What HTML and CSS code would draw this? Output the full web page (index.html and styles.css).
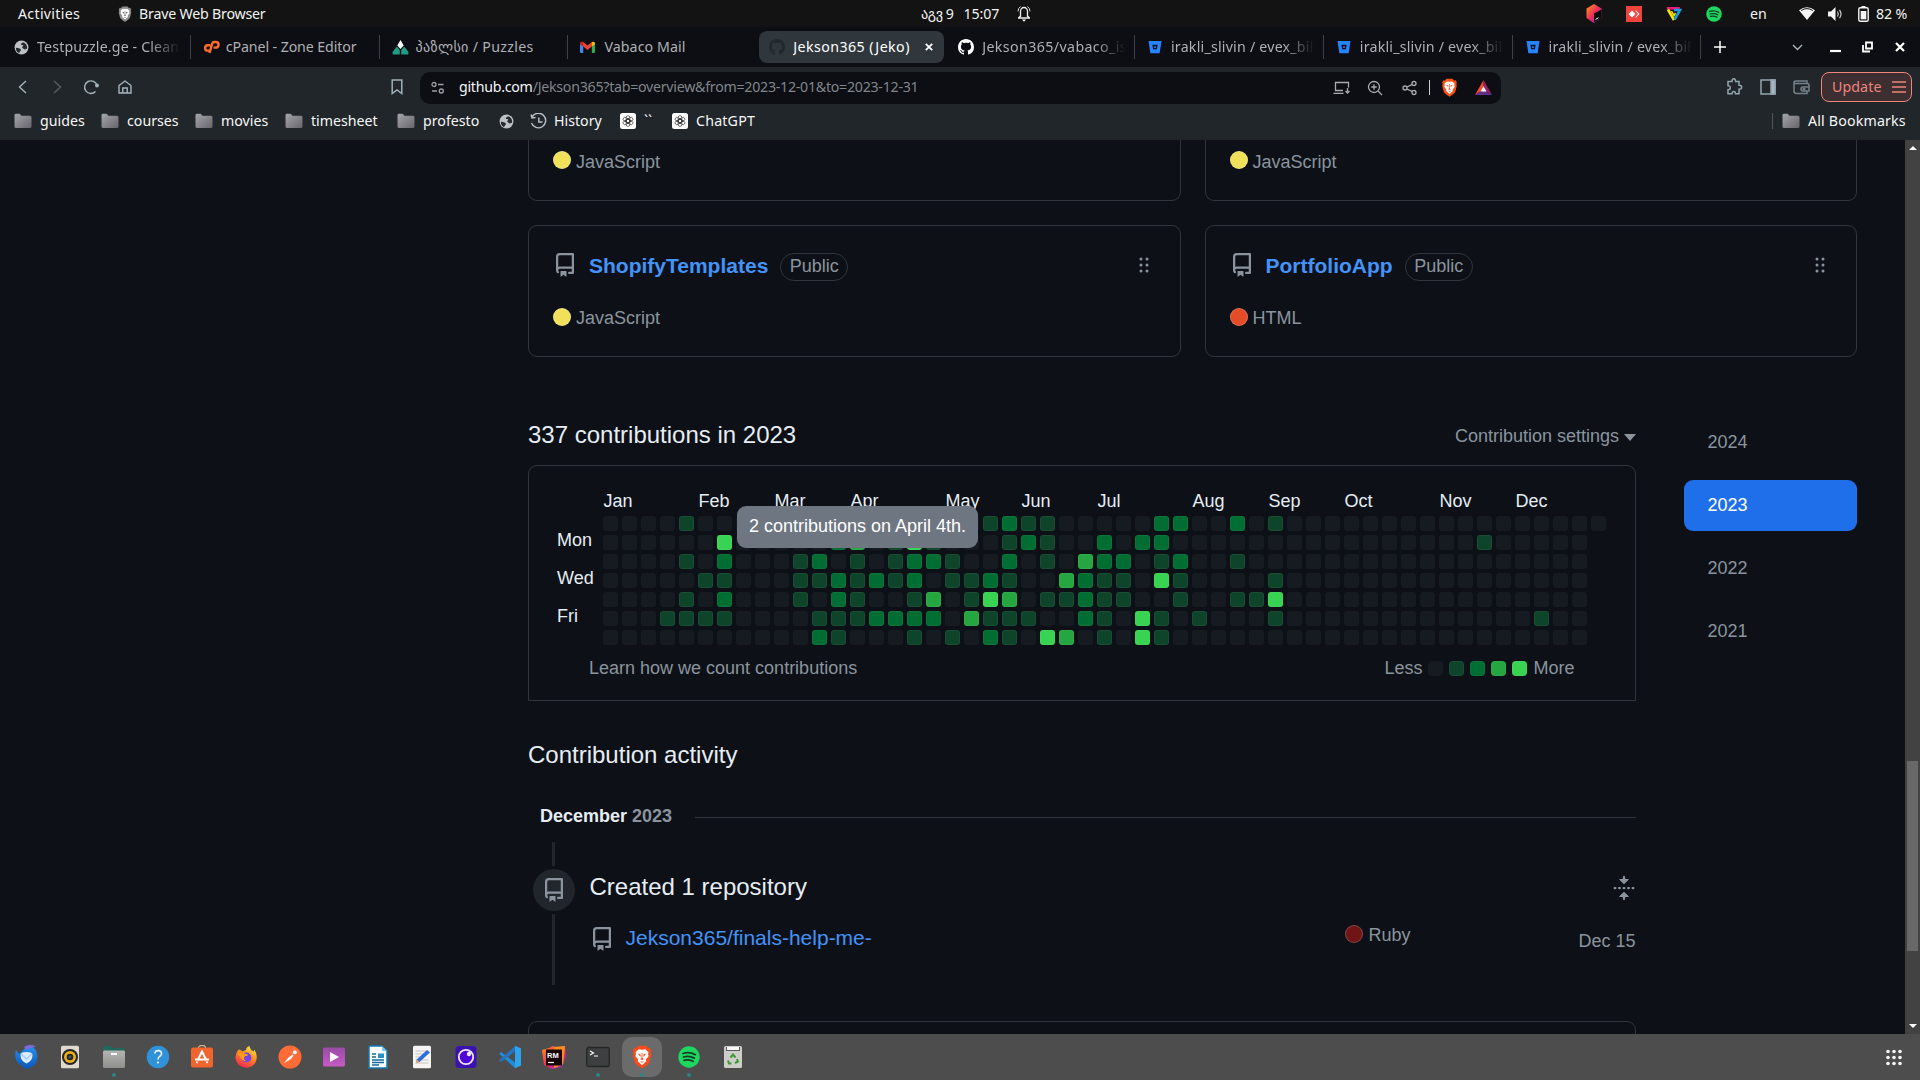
FILE: index.html
```html
<!DOCTYPE html>
<html lang="en">
<head>
<meta charset="utf-8">
<title>Jekson365 (Jeko)</title>
<link rel="stylesheet" href="styles.css">
</head>
<body>
<svg class="defs" aria-hidden="true">
  <defs>
    <linearGradient id="g-folder" x1="0" y1="0" x2="1" y2="1"><stop offset="0" stop-color="#a5a5ad"/><stop offset="1" stop-color="#66656a"/></linearGradient>
    <linearGradient id="g-hot" x1="0" y1="0" x2="1" y2="1"><stop offset="0" stop-color="#ff9a16"/><stop offset=".5" stop-color="#ee2b5b"/><stop offset="1" stop-color="#8e2be0"/></linearGradient>
    <linearGradient id="g-fox" x1=".8" y1="0" x2=".3" y2="1"><stop offset="0" stop-color="#fff14a"/><stop offset=".45" stop-color="#ff8a1e"/><stop offset="1" stop-color="#f5264f"/></linearGradient>
    <linearGradient id="g-blue" x1="0" y1="0" x2="0" y2="1"><stop offset="0" stop-color="#2a92f0"/><stop offset="1" stop-color="#0a55b8"/></linearGradient>
    <linearGradient id="g-video" x1="0" y1="0" x2="0" y2="1"><stop offset="0" stop-color="#9a4ba8"/><stop offset="1" stop-color="#c65bc4"/></linearGradient>
    <linearGradient id="g-grey" x1="0" y1="0" x2="0" y2="1"><stop offset="0" stop-color="#b4b4b2"/><stop offset="1" stop-color="#8f8f8d"/></linearGradient>
  </defs>
  <symbol id="repo" viewBox="0 0 16 16"><path d="M2 2.5A2.5 2.5 0 0 1 4.5 0h8.75a.75.75 0 0 1 .75.75v12.5a.75.75 0 0 1-.75.75h-2.5a.75.75 0 0 1 0-1.5h1.75v-2h-8a1 1 0 0 0-.714 1.7.75.75 0 1 1-1.072 1.05A2.495 2.495 0 0 1 2 11.5Zm10.5-1h-8a1 1 0 0 0-1 1v6.708A2.486 2.486 0 0 1 4.5 9h8ZM5 12.25a.25.25 0 0 1 .25-.25h3.5a.25.25 0 0 1 .25.25v3.25a.25.25 0 0 1-.4.2l-1.45-1.087a.249.249 0 0 0-.3 0L5.4 15.7a.25.25 0 0 1-.4-.2Z"/></symbol>
  <symbol id="grab" viewBox="0 0 16 16"><path d="M10 13a1 1 0 1 1 0-2 1 1 0 0 1 0 2Zm0-4a1 1 0 1 1 0-2 1 1 0 0 1 0 2Zm-4 4a1 1 0 1 1 0-2 1 1 0 0 1 0 2Zm5-9a1 1 0 1 1-2 0 1 1 0 0 1 2 0ZM7 8a1 1 0 1 1-2 0 1 1 0 0 1 2 0ZM6 5a1 1 0 1 1 0-2 1 1 0 0 1 0 2Z"/></symbol>
  <symbol id="fold" viewBox="0 0 16 16"><path d="M10.896 2H8.75V.75a.75.75 0 0 0-1.5 0V2H5.104a.25.25 0 0 0-.177.427l2.896 2.896a.25.25 0 0 0 .354 0l2.896-2.896A.25.25 0 0 0 10.896 2ZM8.75 15.25a.75.75 0 0 1-1.5 0V14H5.104a.25.25 0 0 1-.177-.427l2.896-2.896a.25.25 0 0 1 .354 0l2.896 2.896a.25.25 0 0 1-.177.427H8.75v1.25Zm-6.5-6.5a.75.75 0 0 0 0-1.5h-.5a.75.75 0 0 0 0 1.5h.5ZM6 8a.75.75 0 0 1-.75.75h-.5a.75.75 0 0 1 0-1.5h.5A.75.75 0 0 1 6 8Zm2.25.75a.75.75 0 0 0 0-1.5h-.5a.75.75 0 0 0 0 1.5h.5ZM12 8a.75.75 0 0 1-.75.75h-.5a.75.75 0 0 1 0-1.5h.5A.75.75 0 0 1 12 8Zm2.25.75a.75.75 0 0 0 0-1.5h-.5a.75.75 0 0 0 0 1.5h.5Z"/></symbol>
  <symbol id="github" viewBox="0 0 16 16"><path d="M8 0c4.42 0 8 3.58 8 8a8.013 8.013 0 0 1-5.45 7.59c-.4.08-.55-.17-.55-.38 0-.27.01-1.13.01-2.2 0-.75-.25-1.23-.54-1.48 1.78-.2 3.65-.88 3.65-3.95 0-.88-.31-1.59-.82-2.15.08-.2.36-1.02-.08-2.12 0 0-.67-.22-2.2.82-.64-.18-1.32-.27-2-.27-.68 0-1.36.09-2 .27-1.53-1.03-2.2-.82-2.2-.82-.44 1.1-.16 1.92-.08 2.12-.51.56-.82 1.28-.82 2.15 0 3.06 1.86 3.75 3.64 3.95-.23.2-.44.55-.51 1.07-.46.21-1.61.55-2.33-.66-.15-.24-.6-.83-1.23-.82-.67.01-.27.38.01.53.34.19.73.9.82 1.13.16.45.68 1.31 2.69.94 0 .67.01 1.3.01 1.49 0 .21-.15.45-.55.38A7.995 7.995 0 0 1 0 8c0-4.42 3.58-8 8-8Z"/></symbol>
  <symbol id="globe" viewBox="0 0 16 16"><circle cx="8" cy="8" r="7.4" fill="#bdc1c6"/><path d="M2 8.200c1.400.1 2.600.5 3.800.8 1.200.4 1.800 1 1.400 2.100-.3.800-1 1-1.200 1.800-.1.500-.3.900-.8 1C3.200 12.900 1.900 10.800 2 8.200ZM9.500 2.300c-.3.900-1.900 1-2.100 1.800-.2 1 .5 1.300 1.500 1.300 1.200.1 1.300 1.200.4 1.600-.7.400-.8 1.300.1 1.700.8.400 1.300 1.300 2.400 1.300.7 0 1.200-.6 2-.6.8-3.100-1-6.100-4.300-7.100Z" fill="#24292c"/></symbol>
  <symbol id="bucket" viewBox="0 0 16 16"><path d="M.6 1h14.800l-2.100 14H2.700Z" fill="#2684ff"/><path d="M5 5.300h6l-.9 5.400H5.900Z" fill="#0d0e13"/><path d="M7 7h2v2H7Z" fill="#2684ff"/></symbol>
  <symbol id="folder" viewBox="0 0 18 18"><path d="M.5 3.200Q.5 1.800 2 1.800h3.800l1.500 2H16q1.500 0 1.500 1.500v9.200q0 1.500-1.500 1.500H2Q.5 16 .5 14.500Z" fill="url(#g-folder)"/></symbol>
  <symbol id="lion" viewBox="0 0 24 28"><path d="M7.500 1h9l2.200 2.500 2.300-.3 1.800 3.300-.8 2.500.8 2.500-2.500 9.500-3 3L12 27.500 6.700 24l-3-3L1.200 11.500 2 9l-.8-2.500L3 3.200l2.300.3Z"/><path d="M12 5.500 16 5l3.500 3.500-.5 2.500.8 1.800-3.300 4 .5 2.200-5 4.500-5-4.500.5-2.200-3.300-4L5 11l-.5-2.500L8 5Z" fill="#fff"/><path d="m7 10 3.500 1-.3 3Zm10 0-3.500 1 .3 3ZM9.500 18.500l2.500 1 2.500-1L12 21ZM11.500 9h1v6l1.500 1.500-2 1-2-1 1.500-1.500Z" fill="currentColor"/></symbol>
  <symbol id="spotify" viewBox="0 0 20 20"><circle cx="10" cy="10" r="9.700" fill="#1ed760"/><path d="M4.500 6.800q6-1.800 11.300 1.100M5 10q5.300-1.400 9.800 1M5.500 13q4.300-1 8.200.9" fill="none" stroke="#173b25" stroke-width="1.600" stroke-linecap="round"/></symbol>
  <symbol id="gpt" viewBox="0 0 16 16"><rect width="16" height="16" rx="2.500" fill="#fff"/><g fill="none" stroke="#333" stroke-width=".7"><rect x="6.200" y="2.600" width="3.600" height="7.400" rx="1.800"/><rect x="6.200" y="2.600" width="3.600" height="7.400" rx="1.800" transform="rotate(60 8 8)"/><rect x="6.200" y="2.600" width="3.600" height="7.400" rx="1.800" transform="rotate(120 8 8)"/><rect x="6.200" y="2.600" width="3.600" height="7.400" rx="1.800" transform="rotate(180 8 8)"/><rect x="6.200" y="2.600" width="3.600" height="7.400" rx="1.800" transform="rotate(240 8 8)"/><rect x="6.200" y="2.600" width="3.600" height="7.400" rx="1.800" transform="rotate(300 8 8)"/></g></symbol>
</svg>

<header class="topbar">
  <div class="top-left">
    <span class="t-activities">Activities</span>
    <svg class="top-lion" width="14" height="18"><use href="#lion"/></svg>
    <span class="t-brave">Brave Web Browser</span>
  </div>
  <div class="clock"><span>აგვ 9</span><span class="time">15:07</span>
    <svg width="14" height="17" viewBox="0 0 14 17" fill="none" stroke="#eee" stroke-width="1.300"><path d="M3.500 12V6.500a3.500 4 0 0 1 7 0V12M1 13h12M3.500 11 1.500 13m9-2 2 2"/><path d="M1 6.500Q1.200 3 3.500 1.500M13 6.500Q12.800 3 10.500 1.500" stroke-width=".9"/><path d="M5 14.500h4L7 16.700Z" fill="#fff" stroke="none"/></svg>
  </div>
  <div class="tray">
    <svg width="16" height="19" viewBox="0 0 16 19"><path d="m8 0 7.500 4.500v9L8 19 .5 14V4.500Z" fill="url(#g-hot)"/><path d="m8 9.500 7.500-4v8L8 18.500Z" fill="#0a0808"/><path d="M9.500 15.500l3-1.800" stroke="#fff" stroke-width="1"/></svg>
    <svg width="16" height="16" viewBox="0 0 16 16"><rect width="16" height="16" fill="#ef443b"/><path d="m6 4.500 3.500 3.500L6 11.500 2.500 8ZM9 4.500h1L13.500 8 10 11.500H9L12 8Z" fill="#fff"/></svg>
    <svg width="16" height="16" viewBox="0 0 16 16" fill="none" stroke-width="2.600"><path d="M.8 2.300h13" stroke="#e5197f"/><path d="M2 3.500 8 14" stroke="#ffe600"/><path d="M8.500 13.500 14 4H8" stroke="#1b9de0"/><path d="m5.500 5 2.500 4.500L9.500 7" stroke="#ffe600" stroke-width="1.500"/></svg>
    <svg width="16" height="16"><use href="#spotify"/></svg>
    <span class="lang">en</span>
    <svg class="wifi" width="16" height="13" viewBox="0 0 16 13"><path d="M0 3.200Q8-2.500 16 3.200L8 13Z" fill="#f4f4f4"/><path d="M2.200 3.500Q8-.3 13.800 3.500" fill="none" stroke="#131313" stroke-width="1"/></svg>
    <svg class="vol" width="16" height="14" viewBox="0 0 16 14"><path d="M0 4.500h3L7.500 0v14L3 9.500H0Z" fill="#f4f4f4"/><path d="M9.500 4.500q1.600 2.500 0 5M11.500 2.800q3 4.200 0 8.400" fill="none" stroke="#ccc" stroke-width="1.200"/></svg>
    <svg class="batt" width="11" height="16" viewBox="0 0 11 16"><path d="M3.500 0h4v2h-4Z" fill="#f4f4f4"/><rect x=".8" y="1.800" width="9.400" height="13.400" rx="1.500" fill="none" stroke="#f4f4f4" stroke-width="1.400"/><path d="M2.700 5h5.600v8.300H2.700Z" fill="#f4f4f4"/></svg>
    <span class="pct">82 %</span>
  </div>
</header>

<nav class="tabs">
  <div class="tab"><svg width="15" height="15"><use href="#globe"/></svg><span class="fade puzzle">Testpuzzle.ge - Clean</span></div>
  <div class="tab"><svg width="17" height="14" viewBox="0 0 17 14" fill="none" stroke="#ff6c2c" stroke-width="2.400"><path d="M7.300 5.200H4.800a2.700 2.700 0 0 0 0 5.400h1.500M6.500 13l2.700-9.500q.4-1.500 2-1.500h1.600a2.700 2.700 0 0 1 0 5.600h-2.300"/></svg><span class="cpanel">cPanel - Zone Editor</span></div>
  <div class="tab"><svg width="17" height="15" viewBox="0 0 17 15"><path d="m8.500 0 3.200 5.500L8.500 9 5.300 5.500Z" fill="#fff"/><path d="m4.800 6.500 3 3.500v4.500H.8L.5 12ZM12.200 6.500l-3 3.500v4.500h7L16.500 12Z" fill="#1f9c83"/></svg><span class="kartuli">პაზლსი / Puzzles</span></div>
  <div class="tab nosep"><svg width="15" height="12" viewBox="0 0 15 12"><path d="M0 2h3.200v10H1.200Q0 12 0 11Z" fill="#4285f4"/><path d="M11.800 2H15v9q0 1-1.200 1h-2Z" fill="#34a853"/><path d="M0 2Q1 0 3.200 1l4.300 3.500L11.800 1v4.500L7.500 9 3.200 5.500Z" fill="#ea4335"/><path d="M11.800 1Q14 0 15 2v1.200l-3.200 2.400Z" fill="#fbbc04"/><path d="M0 2q1-2 3.200-1v4.500L0 3.300Z" fill="#c5221f"/></svg><span class="mail">Vabaco Mail</span></div>
  <div class="tab active"><svg width="16" height="16" fill="#22282d"><use href="#github"/></svg><span class="jeko">Jekson365 (Jeko)</span><svg class="close" width="8" height="8" viewBox="0 0 8 8" stroke="#fff" stroke-width="1.800"><path d="m.8.8 6.400 6.400m0-6.400L.8 7.200"/></svg></div>
  <div class="tab"><svg width="16" height="16" fill="#fff"><use href="#github"/></svg><span class="fade vabaco">Jekson365/vabaco_is</span></div>
  <div class="tab bb"><svg width="14" height="14"><use href="#bucket"/></svg><span class="fade">irakli_slivin / evex_bil</span></div>
  <div class="tab bb"><svg width="14" height="14"><use href="#bucket"/></svg><span class="fade">irakli_slivin / evex_bil</span></div>
  <div class="tab bb"><svg width="14" height="14"><use href="#bucket"/></svg><span class="fade">irakli_slivin / evex_bil</span></div>
  <svg class="winctl" width="200" height="20" viewBox="0 0 200 20" fill="none" stroke="#fff" stroke-width="1.800"><path d="M8 10h12M14 4v12" stroke-width="1.500"/><path d="m87 8 4.500 4.500L96 8" stroke="#aab4ba" stroke-width="1.400"/><path d="M124 14h11" stroke-width="2.200"/><path d="M160 5.500h6v6h-6Z"/><path d="M157 8v6.500h7"/><path d="m190 6 8 8m0-8-8 8" stroke-width="2.200"/></svg>
</nav>

<div class="toolbar">
  <svg class="nav-icons" width="140" height="20" viewBox="0 0 140 20" fill="none" stroke="#a5b5bd" stroke-width="1.400"><path d="m26 4-6.500 6 6.500 6"/><path d="m54 4 6.500 6-6.500 6" stroke="#566067"/><path d="M95.500 14.500A6.300 6.300 0 1 1 97 8.500"/><circle cx="97" cy="8.500" r="1.900" fill="#a5b5bd" stroke="none"/><path d="M119 8.500 125 4l6 4.500V16h-12ZM122.800 16v-5h4.400v5"/></svg>
  <svg class="bm-icon" width="14" height="18" viewBox="0 0 14 18" fill="none" stroke="#9fb0b8" stroke-width="1.500"><path d="M2.200 2h9.600v13.500L7 12l-4.800 3.500Z"/></svg>
  <div class="address">
    <svg class="tune" width="14" height="14" viewBox="0 0 14 14" fill="none" stroke="#9aa0a6" stroke-width="1.300"><circle cx="3" cy="3.500" r="2"/><path d="M7 3.500h5.500M1 10h5"/><circle cx="10.300" cy="10" r="2"/></svg>
    <span class="url"><b>github.com</b>/Jekson365?tab=overview&amp;from=2023-12-01&amp;to=2023-12-31</span>
    <svg class="addr-icons" width="108" height="22" viewBox="0 0 108 22" fill="none" stroke="#a8abb0" stroke-width="1.300"><path d="M13 13.500H5.500v-8h13v5M3.500 16.300h10M17.500 11v5m-2-2 2 2 2-2"/><circle cx="44" cy="10" r="5.500"/><path d="m48 14 4 4M44 7.300v5.400M41.300 10h5.400"/><circle cx="75" cy="11" r="2"/><circle cx="84" cy="6.500" r="2"/><circle cx="84" cy="15.500" r="2"/><path d="m77 10 5.200-2.600M77 12l5.200 2.600"/><path d="M99.500 3v15" stroke="#c8cace" stroke-width="1"/></svg>
    <svg class="addr-lion" width="17" height="19" color="#fb542b" fill="#fb5016"><use href="#lion"/></svg>
    <svg class="bat" width="17" height="15" viewBox="0 0 17 15"><path d="M8.500 0 0 15l6-4 2.500-5Z" fill="#ff4724"/><path d="M8.500 0 17 15l-6-4-2.500-5Z" fill="#9e1f63"/><path d="m0 15 6-4h5l6 4Z" fill="#662d91"/><path d="m8.500 6-3 5.500h6Z" fill="#fff"/></svg>
  </div>
  <svg class="right-icons" width="96" height="22" viewBox="0 0 96 22" fill="none" stroke="#93a5ae" stroke-width="1.500"><path d="M7 5.500h3q0-2.800 1.800-2.800T13.600 5.500h3.400v3.700q2.700 0 2.700 2t-2.700 2v4.600H13.500q0-2.200-1.700-2.200T10 17.800H6v-4q2.300 0 2.300-2T6 9.800V5.500Z"/><path d="M39 4h14v14H39Z"/><path d="M49 4h4v14h-4Z" fill="#a6b7c0"/><g stroke="#73818a"><path d="M85 8V5H74q-2 0-2 1.500V15q0 2.500 2.500 2.500H85V15M72 7.500h13q2 0 2 2V15h-6q-2 0-2-2t2-2h6"/><circle cx="82" cy="13" r=".8"/></g></svg>
  <div class="update"><span>Update</span><svg width="14" height="12" viewBox="0 0 14 12" stroke="#f0857b" stroke-width="1.300"><path d="M0 1h14M0 6h14M0 11h14"/></svg></div>
</div>

<div class="bookmarks">
  <svg width="18" height="18"><use href="#folder"/></svg><span class="b1">guides</span>
  <svg width="18" height="18"><use href="#folder"/></svg><span class="b2">courses</span>
  <svg width="18" height="18"><use href="#folder"/></svg><span class="b3">movies</span>
  <svg width="18" height="18"><use href="#folder"/></svg><span class="b4">timesheet</span>
  <svg width="18" height="18"><use href="#folder"/></svg><span class="b5">profesto</span>
  <svg width="15" height="15"><use href="#globe"/></svg>
  <svg class="bhist" width="17" height="17" viewBox="0 0 17 17" fill="none" stroke="#bdc1c6" stroke-width="1.400"><path d="M2.300 3.500A7.300 7.300 0 1 1 1.500 10M1 1.500l1 3.500 3.500-.5M8.800 4.500V9H12.500"/></svg><span class="b6">History</span>
  <svg width="16" height="16"><use href="#gpt"/></svg><span class="b7">``</span>
  <svg width="16" height="16"><use href="#gpt"/></svg><span class="b8">ChatGPT</span>
  <div class="all"><svg width="18" height="18"><use href="#folder"/></svg><span>All Bookmarks</span></div>
</div>

<main class="viewport">
  <div class="profile">
    <section class="pins">
      <article class="pin cut"><p class="langrow"><i class="dot js"></i>JavaScript</p></article>
      <article class="pin cut"><p class="langrow"><i class="dot js"></i>JavaScript</p></article>
      <article class="pin">
        <div class="pinhead"><svg class="ricon" width="24" height="24"><use href="#repo"/></svg><a>ShopifyTemplates</a><span class="pill">Public</span><svg class="grab" width="24" height="24"><use href="#grab"/></svg></div>
        <p class="langrow"><i class="dot js"></i>JavaScript</p>
      </article>
      <article class="pin">
        <div class="pinhead"><svg class="ricon" width="24" height="24"><use href="#repo"/></svg><a>PortfolioApp</a><span class="pill">Public</span><svg class="grab" width="24" height="24"><use href="#grab"/></svg></div>
        <p class="langrow"><i class="dot html"></i>HTML</p>
      </article>
    </section>

    <div class="columns">
      <div class="feed">
        <div class="chead"><h2>337 contributions in 2023</h2><span class="settings">Contribution settings<i class="caret"></i></span></div>
        <section class="calendar">
          <div class="months" id="months"></div>
          <div class="calbody">
            <div class="days"><span>Mon</span><span>Wed</span><span>Fri</span></div>
            <div class="cells" id="cells"></div>
          </div>
          <div class="calfoot"><span>Learn how we count contributions</span><div class="legend"><span>Less</span><i class="c l0"></i><i class="c l1"></i><i class="c l2"></i><i class="c l3"></i><i class="c l4"></i><span>More</span></div></div>
          <div class="tooltip">2 contributions on April 4th.</div>
        </section>

        <h2 class="acttitle">Contribution activity</h2>
        <h3 class="month"><span>December <em>2023</em></span></h3>
        <div class="timeline">
          <div class="rail"><i class="bar top"></i><div class="badge"><svg width="24" height="24"><use href="#repo"/></svg></div><i class="bar bottom"></i></div>
          <div class="event">
            <div class="evhead"><span>Created 1 repository</span><svg width="24" height="24"><use href="#fold"/></svg></div>
            <div class="evrow"><svg class="evicon" width="24" height="24"><use href="#repo"/></svg><a>Jekson365/finals-help-me-</a><span class="ruby"><i class="dot rb"></i>Ruby</span><time>Dec 15</time></div>
          </div>
        </div>
        <div class="more"></div>
      </div>
      <aside class="years"><a>2024</a><a class="sel">2023</a><a>2022</a><a>2021</a></aside>
    </div>
  </div>
  <div class="scroll"><i class="up"></i><i class="thumb"></i><i class="down"></i></div>
</main>

<footer class="dock">
  <div class="app"><svg viewBox="0 0 24 24"><path d="M2 5q-2 5 1 12l9 7q11-2 11.500-12Q23 3 16 .5q-5 1-6 4L5 9Z" fill="url(#g-blue)"/><path d="M10 2Q14-1 20 .5L22 2q-6-.5-9 3Z" fill="#8467dc"/><path d="M6.500 10q0-3 6-3t6 3q0 6-6 8.500-6-2.500-6-8.500Z" fill="#dcecfb"/><path d="m7 9 5.500 5L18 9" fill="none" stroke="#a6cdf5" stroke-width="1.500"/></svg></div>
  <div class="app"><svg viewBox="0 0 24 24"><rect x="3" y=".8" width="18" height="22.400" rx="1.500" fill="#dfdacd"/><circle cx="12" cy="12" r="8" fill="#242424"/><circle cx="12" cy="12" r="6" fill="#e6b01e"/><circle cx="12" cy="12" r="3.300" fill="#242424"/><circle cx="12" cy="12" r="1.400" fill="#555"/></svg></div>
  <div class="app run"><svg viewBox="0 0 24 24"><path d="M1 3q0-2 2-2h6l2 2h10q2 0 2 2v4H1Z" fill="#23685d"/><rect x="1" y="5.500" width="22" height="17.500" rx="1.500" fill="url(#g-grey)"/><rect x="9" y="8" width="6" height="2" fill="#fff"/></svg></div>
  <div class="app"><svg viewBox="0 0 24 24"><circle cx="12" cy="12" r="11.200" fill="#2f93dc"/><path d="M8.800 8.500q.5-3 3.400-3 3.500.2 3.300 3.300-.2 1.700-2 2.700-1.500 1-1.500 3" fill="none" stroke="#fff" stroke-width="1.500"/><circle cx="12" cy="17.500" r="1.100" fill="#fff"/></svg></div>
  <div class="app"><svg viewBox="0 0 24 24"><path d="M8.500 3q0-2.500 3.500-2.500T15.500 3" fill="none" stroke="#d9b996" stroke-width="1.200"/><rect x="1" y="2.500" width="22" height="20" rx="2" fill="#f0642d"/><path d="m7.500 15.500 4.500-9 4.500 9M5 14.500h14M6.500 18l1-1.500m10 1.500-1-1.500" fill="none" stroke="#fff" stroke-width="2"/></svg></div>
  <div class="app"><svg viewBox="0 0 24 24"><path d="M4.500 4.500q2 .2 4 2L12 5q0-3 3.500-4 .5 3.500 4 5.500.8-1 .6-2 4 5 2 11.500Q19.500 22.500 12 22.700 3 22 1.500 13.500 1 8.500 4.500 4.500Z" fill="url(#g-fox)"/><circle cx="12.300" cy="12.500" r="5" fill="#7542e5"/><path d="M3 9q4-3 8-.3 3 0 3 1.800l-3 .8q-3 3 2 5-6 0-7-5Z" fill="#ff9b1f"/></svg></div>
  <div class="app"><svg viewBox="0 0 24 24"><circle cx="12" cy="12" r="11.500" fill="#ff6c37"/><path d="m6 18 4.500-5.500 4-3 1 1-2.500 3.500L8 17Z" fill="#fff"/><circle cx="16.800" cy="7.300" r="2" fill="#fff"/></svg></div>
  <div class="app"><svg viewBox="0 0 24 24"><rect x="1" y="2.500" width="22" height="19" rx="1.500" fill="url(#g-video)"/><path d="M8 7v10l9-5Z" fill="#fff"/></svg></div>
  <div class="app"><svg viewBox="0 0 24 24"><path d="M3 1h13l5 5v17H3Z" fill="#fff" stroke="#1478b0" stroke-width="1.500"/><path d="M16 1v5h5" fill="#7fc4ee"/><path d="M6 9h4m-4 3h4m-4 3h12M6 17.500h12M6 20h7" stroke="#126ca0" stroke-width="1.500"/><path d="M12 8.500h6v4.500h-6Z" fill="#2a8fc7"/></svg></div>
  <div class="app"><svg viewBox="0 0 24 24"><rect x="3" y=".8" width="18" height="22.400" rx="1.500" fill="#f6f5f3"/><path d="M5.500 6h13m-13 3h9m-9 3h7m-7 3h13m-13 3h13" stroke="#c5c2bd" stroke-width="1"/><path d="m17 5 3 2.500L9.500 17l-3.500 1 .8-3.500Z" fill="#2a6ee0"/><path d="m6.800 14.500 2.700 2.500-4 1.500Z" fill="#efaa77"/></svg></div>
  <div class="app"><svg viewBox="0 0 24 24"><rect x="1.500" y="1" width="21" height="22" rx="3.500" fill="#3a12b0"/><circle cx="12" cy="12" r="7.200" fill="#4f06d6" stroke="#ece8fb" stroke-width="1.800"/><circle cx="15" cy="9" r="2.200" fill="#ece8fb"/></svg></div>
  <div class="app"><svg viewBox="0 0 24 24"><path d="m17 1 6 2.500v17L17 23 1 8.800l2-1.800 14 10.500Z" fill="#1b8fdc"/><path d="M17 1v5.500L3 17l-2-1.800Z" fill="#2673bf"/><path d="M17 1l6 2.500v17L17 23Z" fill="#2ea4ec"/></svg></div>
  <div class="app"><svg viewBox="0 0 24 24"><path d="M0 5 7 3l4-2 5 2 7-2 1 10-4 11-10 2-8-4Z" fill="url(#g-hot)"/><path d="m12 2 11-1-2 18-6 3-3 1Z" fill="#ff8e1c"/><rect x="4" y="4.500" width="16" height="16" fill="#150509"/><text x="5" y="12.500" class="rm">RM</text><path d="M6 17.500h6" stroke="#fff" stroke-width="1.200"/></svg></div>
  <div class="app run"><svg viewBox="0 0 24 24"><rect x=".7" y="2.500" width="22.600" height="19" rx="2" fill="#3d3f40" stroke="#252626" stroke-width="1.300"/><path d="m4 6 3.500 2L4 10M8 11h4" fill="none" stroke="#fff" stroke-width="1.200"/></svg></div>
  <div class="app run current"><svg viewBox="0 0 24 24" color="#fb4a1c" fill="#fb4a1c"><use href="#lion"/></svg></div>
  <div class="app run shift"><svg viewBox="0 0 24 24"><use href="#spotify" x="1" y="1" width="22" height="22"/></svg></div>
  <div class="app"><svg viewBox="0 0 24 24"><rect x="3" y="1" width="18" height="22" rx="1.500" fill="#cfcdc9"/><path d="M5 2h14v4H5Z" fill="#5a5a5a"/><path d="M6 2h12v3H6Z" fill="#f8f8f8"/><path d="m9.500 12.500 2.500-3 2.500 3M16 14l1 2.500-3 1.500M10.500 18.500H8l-1-3" fill="none" stroke="#379b30" stroke-width="2"/></svg></div>
  <svg class="grid9" width="16" height="17" viewBox="0 0 16 17" fill="#f5f5f5"><circle cx="2" cy="2.500" r="1.800"/><circle cx="8" cy="2.500" r="1.800"/><circle cx="14" cy="2.500" r="1.800"/><circle cx="2" cy="8.500" r="1.800"/><circle cx="8" cy="8.500" r="1.800"/><circle cx="14" cy="8.500" r="1.800"/><circle cx="2" cy="14.500" r="1.800"/><circle cx="8" cy="14.500" r="1.800"/><circle cx="14" cy="14.500" r="1.800"/></svg>
</footer>
<script src="script.js"></script>
</body>
</html>
```
FILE: styles.css
```css
* { box-sizing: border-box; }
body { margin: 0; width: 1920px; height: 1080px; overflow: hidden; background: #0d1117; display: flex; flex-direction: column; font-family: "Noto Sans", "DejaVu Sans", sans-serif; font-size: 14.2px; white-space: nowrap; }
h2, h3, p { margin: 0; font-weight: 400; }
i { display: block; font-style: normal; }
svg { flex: none; display: block; }
.defs { position: absolute; width: 0; height: 0; }

/* desktop top bar */
.topbar { height: 27px; background: #131313; color: #f2f2f2; display: grid; grid-template-columns: 921px 1fr 339px; align-items: center; }
.top-left { display: flex; align-items: center; padding-left: 18px; }
.t-activities { width: 100px; letter-spacing: .3px; }
.top-lion { fill: #8b8b8b; color: #666; margin-right: 7px; }
.t-brave { letter-spacing: -.2px; }
.clock { display: flex; align-items: center; letter-spacing: -.4px; padding-bottom: 1px; }
.clock span { margin-right: 8px; }
.clock .time { margin-left: 2px; letter-spacing: -.1px; }
.clock svg { margin-left: 10px; }
.tray { display: flex; align-items: center; padding-left: 5px; gap: 24px; }
.lang { width: 16px; margin-left: 4px; }
.wifi { margin-left: 9px; }
.vol { margin-left: -11px; }
.batt { margin-left: -10px; }
.pct { margin-left: -17px; letter-spacing: -.1px; }

/* tab strip */
.tabs { height: 40px; background: #0d0e13; color: #adb0b4; display: flex; align-items: center; padding: 0 0 0 2px; }
.tab { flex: none; width: 188.8px; height: 32px; display: flex; align-items: center; padding-left: 12px; position: relative; letter-spacing: -.1px; }
.tab span { margin: -1px 0 0 8px; overflow: hidden; }
.tab::after { content: ""; position: absolute; right: 0; top: 4px; width: 1px; height: 24px; background: #3e4247; }
.tab.nosep::after, .tab.active::after { display: none; }
.tab .fade { width: 144px; -webkit-mask-image: linear-gradient(90deg, #000 78%, transparent); mask-image: linear-gradient(90deg, #000 78%, transparent); }
.tab.active { background: #2f373d; color: #fff; border-radius: 8px; width: 185px; margin: 0 2px; padding-left: 10px; }
.tab .puzzle { letter-spacing: .15px; }
.tab .cpanel { margin-left: 6px; letter-spacing: -.1px; }
.tab .kartuli { margin-left: 7px; letter-spacing: .3px; }
.tab .mail { margin-left: 9px; letter-spacing: .1px; }
.tab .jeko { letter-spacing: .45px; }
.tab .vabaco { letter-spacing: .4px; }
.tab.bb { padding-left: 13px; }
.tab.bb .fade { margin-left: 9px; letter-spacing: .22px; }
.close { margin-left: 15px; }
.winctl { margin-left: 5px; }

/* navigation bar */
.toolbar { height: 40px; background: #21262a; display: flex; align-items: center; }
.nav-icons { margin-right: 250px; }
.bm-icon { margin-right: 16px; }
.address { flex: none; width: 1081px; height: 32px; margin-top: 1px; background: #0d0e13; border-radius: 10px; display: flex; align-items: center; }
.tune { margin: 0 14px 0 11px; }
.url { width: 869px; margin-top: -2px; color: #80858b; letter-spacing: -.26px; }
.url b { color: #f4f5f6; font-weight: 400; }
.addr-icons { margin-left: 2px; }
.addr-lion { margin-left: 3px; }
.bat { margin-left: 17px; }
.right-icons { margin: 0 3px 0 221px; }
.update { flex: none; width: 91px; height: 30px; border: 1px solid #f0857b; border-radius: 8px; background: #3c2e31; color: #f0857b; display: flex; align-items: center; padding-left: 10px; gap: 5px; }
.update span { width: 55px; margin-top: -2px; letter-spacing: .1px; }

/* bookmarks bar */
.bookmarks { height: 33px; background: #21262a; color: #f6f7f7; display: flex; align-items: center; padding: 0 0 5px 14px; }
.bookmarks span { margin: -2px 0 0 8px; }
.bookmarks .b1 { width: 61px; }
.bookmarks .b2 { width: 68px; }
.bookmarks .b3 { width: 64px; }
.bookmarks .b4 { width: 86px; }
.bookmarks .b5 { width: 76px; }
.bhist { margin-left: 16px; }
.bookmarks .b6 { width: 66px; margin-left: 7px; }
.bookmarks .b7 { width: 28px; }
.bookmarks .b8 { letter-spacing: .2px; }
.all { margin-left: auto; width: 148px; height: 16px; border-left: 1px solid #50565a; display: flex; align-items: center; padding-left: 9px; letter-spacing: .18px; }

/* page */
.viewport { height: 894px; display: flex; background: #0d1117; font-family: "Liberation Sans", Arial, sans-serif; font-size: 18px; color: #e6edf3; overflow: hidden; }
.profile { width: 1905px; padding: 0 48px 0 528px; }
.pins { display: grid; grid-template-columns: 1fr 1fr; gap: 24px; }
.pin { height: 132px; border: 1px solid #30363d; border-radius: 9px; padding: 24px; }
.pin.cut { height: 61px; border-top: 0; border-radius: 0 0 9px 9px; padding-top: 8px; }
.pinhead { height: 32px; display: flex; align-items: center; font-size: 21px; font-weight: 700; color: #4493f8; }
.ricon { margin: 0 12px 2px 0; fill: #8b949e; }
.pill { height: 28px; margin: 1px 0 0 12px; padding: 0 8.5px; border: 1px solid #30363d; border-radius: 14px; font-size: 18px; font-weight: 400; line-height: 25px; color: #8b949e; }
.grab { margin: 0 0 2px auto; fill: #8b949e; }
.langrow { height: 28px; margin-top: 22px; display: flex; align-items: center; color: #8b949e; }
.cut .langrow { margin-top: 0; }
.dot { width: 18px; height: 18px; border-radius: 50%; border: 1px solid rgba(255, 255, 255, .2); margin: 0 5px 2px 0; }
.cut .dot { margin-bottom: 4px; }
.js { background: #f1e05a; }
.html { background: #e34c26; }
.rb { background: #701516; }

.columns { display: flex; gap: 48px; margin-top: 60px; }
.feed { width: 1108px; }
h2 { font-size: 24px; line-height: 36px; }
.chead { display: flex; justify-content: space-between; align-items: center; height: 36px; margin-bottom: 12px; }
.settings { display: flex; align-items: center; color: #8b949e; padding-top: 2px; }
.caret { margin-left: 5px; border: 6px solid transparent; border-top: 7px solid #8b949e; border-bottom: 0; margin-top: 2px; }

.calendar { position: relative; height: 236px; border: 1px solid #30363d; border-radius: 9px 9px 0 0; padding: 20px 0 0 28px; }
.months { height: 30px; line-height: 30px; margin-left: 46.5px; display: grid; grid-template-columns: repeat(53, 19px); }
.calbody { display: flex; }
.days { width: 46px; display: flex; flex-direction: column; padding-top: 14px; }
.days span { height: 38px; line-height: 20px; }
.cells { height: 129px; display: grid; grid-auto-flow: column; grid-template-rows: repeat(7, 15px); grid-auto-columns: 15px; gap: 4px; }
.c { width: 15px; height: 15px; border-radius: 3px; box-shadow: inset 0 0 0 1px rgba(255, 255, 255, .05); }
.l0 { background: #161b22; box-shadow: none; }
.l1 { background: #0e4429; }
.l2 { background: #006d32; }
.l3 { background: #26a641; }
.l4 { background: #39d353; }
.calfoot { height: 30px; margin: 8px 60.5px 0 32px; display: flex; justify-content: space-between; align-items: center; color: #8b949e; }
.legend { display: flex; align-items: center; gap: 6px; }
.legend .c { border-radius: 4px; }
.tooltip { position: absolute; left: 208px; top: 40px; width: 241px; height: 42px; border-radius: 9px; background: #6e7681; color: #fff; line-height: 40px; text-align: center; }

.acttitle { margin-top: 36px; }
.month { margin: 29px 0 12px 12px; height: 28px; display: flex; align-items: center; font-size: 18px; font-weight: 700; }
.month em { font-style: normal; color: #8b949e; }
.month::after { content: ""; flex: 1; height: 1px; margin: 3px 0 0 23px; background: #30363d; }
.timeline { display: flex; gap: 14.5px; height: 143px; }
.rail { width: 42px; margin-left: 5px; display: flex; flex-direction: column; align-items: center; gap: 3px; }
.bar { width: 3px; margin-right: 1px; background: #21262d; }
.top { height: 24px; }
.bottom { height: 71px; }
.badge { width: 42px; height: 42px; border-radius: 50%; background: #21262d; display: flex; align-items: center; justify-content: center; fill: #8b949e; }
.event { flex: 1; padding-top: 27px; }
.evhead { height: 36px; display: flex; justify-content: space-between; align-items: center; font-size: 24px; fill: #8b949e; }
.evhead svg { margin-top: 2px; }
.evrow { height: 30px; margin-top: 18px; display: flex; align-items: center; color: #8b949e; }
.evrow a { width: 719.5px; font-size: 21px; color: #4493f8; }
.evicon { margin: 2px 12px 0 0; fill: #8b949e; }
.ruby { display: flex; align-items: center; margin-bottom: 6px; }
.ruby .dot { margin-right: 5.5px; }
.evrow time { margin: 6px .5px 0 auto; }
.more { height: 60px; margin-top: 36px; border: 1px solid #30363d; border-radius: 9px; }
.years { width: 173px; display: flex; flex-direction: column; gap: 12px; color: #8b949e; }
.years a { height: 51px; line-height: 50px; padding-left: 23.5px; border-radius: 9px; }
.years .sel { background: #1f6feb; color: #fff; }

.scroll { width: 15px; background: #424242; display: flex; flex-direction: column; align-items: center; }
.up { margin-top: 6px; border: 4px solid transparent; border-bottom: 4px solid #fff; border-top: 0; }
.thumb { width: 11px; height: 190px; margin-top: 611px; background: #686868; }
.down { margin-top: 73px; border: 4px solid transparent; border-top: 4px solid #fff; border-bottom: 0; }

/* dock */
.dock { height: 46px; background: #4d4d4d; display: flex; align-items: center; padding-left: 4px; }
.app { width: 44px; height: 46px; display: flex; align-items: center; justify-content: center; position: relative; }
.app svg { width: 24px; height: 24px; position: relative; }
.app.run::after { content: ""; position: absolute; left: 20px; bottom: 3px; width: 4px; height: 4px; border-radius: 50%; background: #2b8582; }
.app.current::before { content: ""; position: absolute; left: 2px; top: 3px; width: 40px; height: 40px; border-radius: 10px; background: #6b6b6b; }
.app.shift { margin-left: 3px; }
.rm { font: 700 7.5px "Liberation Sans", sans-serif; fill: #fff; }
.grid9 { margin: 0 18px 0 auto; }
```
FILE: script.js
```js
// One object per weekday (Sunday first): week index -> contribution level.
const weeks = 53;
const rows = [
  { 4: 1, 20: 1, 21: 2, 22: 1, 23: 1, 29: 2, 30: 2, 33: 2, 35: 1 },
  { 6: 4, 12: 2, 13: 3, 15: 1, 16: 4, 17: 1, 21: 1, 22: 2, 23: 1, 26: 2, 28: 2, 29: 2, 46: 1 },
  { 4: 1, 6: 2, 10: 1, 11: 2, 13: 1, 15: 1, 16: 2, 17: 2, 18: 1, 21: 2, 23: 1, 25: 3, 26: 2, 27: 2, 29: 1, 30: 2, 33: 1 },
  { 5: 1, 6: 1, 10: 1, 11: 1, 12: 2, 13: 1, 14: 2, 15: 1, 16: 2, 18: 1, 19: 1, 20: 2, 21: 1, 24: 3, 25: 2, 26: 1, 27: 1, 29: 4, 30: 1, 35: 1 },
  { 4: 1, 6: 2, 10: 1, 12: 2, 13: 1, 16: 1, 17: 3, 19: 1, 20: 4, 21: 3, 23: 1, 24: 1, 25: 2, 26: 1, 27: 1, 30: 1, 33: 1, 34: 1, 35: 4 },
  { 3: 1, 4: 1, 5: 1, 6: 1, 11: 1, 12: 1, 13: 1, 14: 2, 15: 2, 16: 2, 17: 2, 19: 3, 20: 1, 21: 1, 22: 1, 25: 2, 26: 1, 28: 4, 29: 1, 31: 1, 35: 1, 49: 1 },
  { 11: 2, 12: 1, 16: 1, 18: 1, 20: 2, 21: 1, 23: 4, 24: 3, 26: 1, 28: 4, 29: 1 }
];
const cells = document.getElementById("cells");
for (let w = 0; w < weeks; w++) {
  for (let d = 0; d < 7; d++) {
    if (w === weeks - 1 && d > 0) break;
    const cell = document.createElement("i");
    cell.className = "c l" + (rows[d][w] || 0);
    cells.appendChild(cell);
  }
}
const starts = { Jan: 0, Feb: 5, Mar: 9, Apr: 13, May: 18, Jun: 22, Jul: 26, Aug: 31, Sep: 35, Oct: 39, Nov: 44, Dec: 48 };
const months = document.getElementById("months");
for (const [name, col] of Object.entries(starts)) {
  const label = document.createElement("span");
  label.textContent = name;
  label.style.gridColumn = col + 1;
  label.style.gridRow = 1;
  months.appendChild(label);
}
```
